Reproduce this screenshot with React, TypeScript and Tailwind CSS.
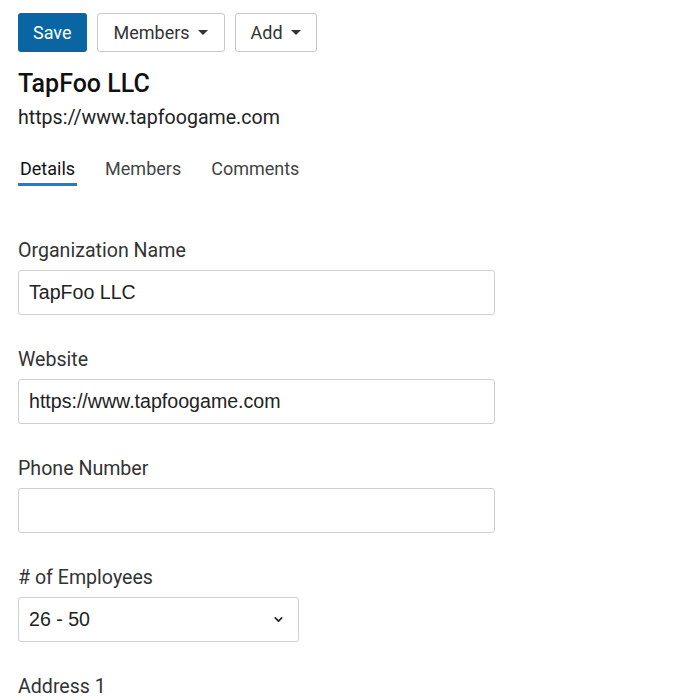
import { ChevronDown } from 'lucide-react';

const fields = [
  { label: 'Organization Name', value: 'TapFoo LLC' },
  { label: 'Website', value: 'https://www.tapfoogame.com' },
  { label: 'Phone Number', value: '' },
];

function Caret() {
  return (
    <svg width="10" height="6" viewBox="0 0 10 6" className="ml-2">
      <path d="M0 0h10L5 5z" fill="#333" />
    </svg>
  );
}

const inputFont = { fontFamily: '"Liberation Sans", Arial, sans-serif' };

export default function App() {
  return (
    <div
      className="min-h-[700px] bg-white px-[18px] pt-[13px] text-[#222]"
      style={{ fontFamily: 'Roboto, "Noto Sans", sans-serif' }}
    >
      {/* Toolbar */}
      <div className="flex items-center gap-[10px]">
        <button className="h-[39px] rounded-[3px] bg-[#0a66a3] px-[15px] text-[18px] text-white">
          Save
        </button>
        <button className="flex h-[39px] items-center rounded-[3px] border border-[#c8c8c8] px-[16px] text-[18px] text-[#333]">
          Members
          <Caret />
        </button>
        <button className="flex h-[39px] items-center rounded-[3px] border border-[#c8c8c8] px-[15px] text-[18px] text-[#333]">
          Add
          <Caret />
        </button>
      </div>

      {/* Header */}
      <h1 className="mt-[17px] text-[25px] leading-[30px] font-medium text-[#111]">TapFoo LLC</h1>
      <p className="mt-[7px] text-[19.6px] leading-[24px] text-[#222]">https://www.tapfoogame.com</p>

      {/* Tabs */}
      <div className="mt-[25px] flex gap-[26px] text-[18px] leading-[27px]">
        <div className="border-b-[3px] border-[#1a7fd4] px-[2px] pb-[1px] text-[#111]">Details</div>
        <div className="px-[2px] pb-[1px] text-[#444]">Members</div>
        <div className="px-[2px] pb-[1px] text-[#444]">Comments</div>
      </div>

      {/* Form */}
      <div className="mt-[53px] flex flex-col gap-[33px]">
        {fields.map((f) => (
          <div key={f.label}>
            <label className="block text-[19.6px] leading-[24px] text-[#333]">{f.label}</label>
            <input
              readOnly
              value={f.value}
              style={inputFont}
              className="mt-[7px] h-[45px] w-[477px] rounded-[3px] border border-[#d0d0d0] px-[10px] text-[19.6px] text-[#222] outline-none"
            />
          </div>
        ))}
        <div>
          <label className="block text-[19.6px] leading-[24px] text-[#333]"># of Employees</label>
          <div
            style={inputFont}
            className="mt-[7px] flex h-[45px] w-[281px] items-center justify-between rounded-[3px] border border-[#d0d0d0] pr-[13px] pl-[10px] text-[19.6px] text-[#222]"
          >
            <span>26 - 50</span>
            <ChevronDown size={13} strokeWidth={3} color="#222" />
          </div>
        </div>
        <div>
          <label className="block text-[19.6px] leading-[24px] text-[#333]">Address 1</label>
        </div>
      </div>
    </div>
  );
}
